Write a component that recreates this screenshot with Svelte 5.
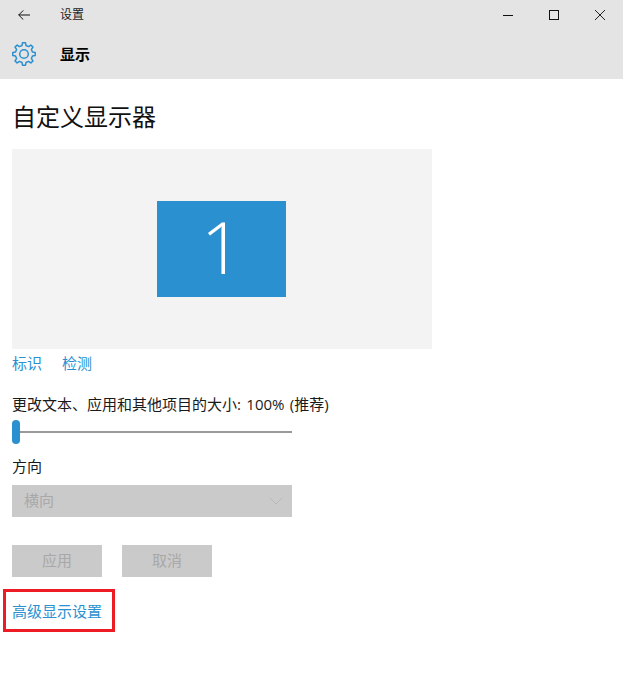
<script>
  const actions = ['标识', '检测'];

  function gearPath(cx, cy, outer, inner, teeth) {
    const step = (Math.PI * 2) / teeth;
    const pts = [];
    for (let i = 0; i < teeth; i++) {
      const a = i * step - Math.PI / 2;
      const w1 = step * 0.3;
      const w2 = step * 0.17;
      pts.push([a - w1, inner], [a - w2, outer], [a + w2, outer], [a + w1, inner]);
    }
    return (
      pts
        .map(([a, r], i) => `${i ? 'L' : 'M'}${(cx + r * Math.cos(a)).toFixed(2)} ${(cy + r * Math.sin(a)).toFixed(2)}`)
        .join('') + 'Z'
    );
  }
  const gear = gearPath(12, 12, 11.3, 8.7, 8);
</script>

<div class="window">
  <header class="head">
    <div class="titlebar">
      <button class="back" aria-label="返回">
        <svg width="12" height="10" viewBox="0 0 12 10"><path d="M5.300 .4.700 5l4.600 4.600M.7 5H12" fill="none" stroke="#111" stroke-width="1"/></svg>
      </button>
      <span class="apptitle">设置</span>
      <div class="controls">
        <svg width="46" height="30" viewBox="0 0 46 30"><path d="M18 15.500H28" stroke="#111" fill="none"/></svg>
        <svg width="46" height="30" viewBox="0 0 46 30"><rect x="18.500" y="10.500" width="9" height="9" fill="none" stroke="#111"/></svg>
        <svg width="46" height="30" viewBox="0 0 46 30"><path d="M18 10 28 20M28 10 18 20" stroke="#222" fill="none"/></svg>
      </div>
    </div>
    <div class="pagebar">
      <svg class="gear" width="24" height="24" viewBox="0 0 24 24" fill="none" stroke="#2b90d0" stroke-width="1.500" stroke-linejoin="round">
        <circle cx="12" cy="12" r="4.300"/>
        <path d={gear}/>
      </svg>
      <span class="pagetitle">显示</span>
    </div>
  </header>

  <main class="content">
    <h1>自定义显示器</h1>
    <div class="preview">
      <div class="monitor">1</div>
    </div>
    <div class="links">
      {#each actions as a}<span class="link">{a}</span>{/each}
    </div>
    <div class="label scale">更改文本、应用和其他项目的大小: 100% (推荐)</div>
    <div class="slider"><span class="thumb"></span></div>
    <div class="label dir">方向</div>
    <div class="select">
      <span>横向</span>
      <svg width="14" height="8" viewBox="0 0 14 8"><path d="M.5.5 7 7 13.500.5" fill="none" stroke="#b8b8b8"/></svg>
    </div>
    <div class="buttons">
      <span class="btn">应用</span>
      <span class="btn">取消</span>
    </div>
    <div class="advanced"><span class="link">高级显示设置</span></div>
  </main>
</div>

<style>
  :global(body) { margin: 0; background: #fff; }
  .window {
    width: 623px;
    height: 683px;
    overflow: hidden;
    font-family: "Open Sans", "Noto Sans CJK SC", "Liberation Sans", sans-serif;
    font-size: 15px;
    color: #1a1a1a;
  }
  .head { height: 79px; background: #e4e4e4; }
  .titlebar { height: 30px; display: flex; align-items: center; }
  .back { width: 48px; height: 30px; padding: 0 0 1px 18px; border: 0; background: none; display: flex; align-items: center; box-sizing: border-box; }
  .apptitle { margin-left: 12px; font-size: 12px; color: #222; line-height: 30px; height: 30px; }
  .controls { margin-left: auto; display: flex; }
  .pagebar { height: 49px; display: flex; align-items: center; padding-left: 12px; }
  .gear { flex: none; margin-bottom: 2px; }
  .pagetitle { margin-left: 24px; font-weight: 700; color: #000; margin-bottom: 2px; }
  .content { padding: 0 12px; }
  h1 { margin: 0; height: 70px; display: flex; align-items: center; font-size: 24px; font-weight: 400; color: #111; line-height: 1; padding: 6px 0 0 0; box-sizing: border-box; }
  .preview { width: 420px; height: 200px; background: #f3f3f3; display: flex; justify-content: center; padding: 52px 1px 0 0; box-sizing: border-box; }
  .monitor {
    width: 129px; height: 96px; background: #2b90d0; color: #fff;
    font-family: "Open Sans", sans-serif; font-weight: 300; font-size: 72px; line-height: 90px; text-align: center;
  }
  .links { display: flex; gap: 20px; margin-top: 3px; height: 22px; line-height: 22px; }
  .link { color: #2b90d0; }
  .label { line-height: 22px; }
  .scale { margin-top: 19px; word-spacing: 1.5px; }
  .slider { position: relative; width: 280px; height: 24px; margin-top: 5px; }
  .slider::before { content: ""; position: absolute; left: 0; right: 0; top: 11px; height: 2px; background: #999; }
  .thumb { position: absolute; left: 0; top: 0; width: 8px; height: 24px; border-radius: 4px; background: #2b90d0; }
  .dir { margin-top: 11px; }
  .select { width: 280px; height: 32px; margin-top: 8px; background: #cacaca; color: #a8a8a8; display: flex; align-items: center; justify-content: space-between; padding: 0 9px 0 12px; box-sizing: border-box; }
  .select span { padding-bottom: 3px; }
  .buttons { display: flex; gap: 20px; margin-top: 28px; }
  .btn { width: 90px; height: 32px; background: #cacaca; color: #a8a8a8; display: flex; align-items: center; justify-content: center; padding-bottom: 3px; box-sizing: border-box; }
  .advanced { width: 112px; height: 43px; margin: 12px 0 0 -9px; padding: 8px 0 0 6px; border: 3px solid #ed1c24; line-height: 22px; box-sizing: border-box; white-space: nowrap; }
</style>
